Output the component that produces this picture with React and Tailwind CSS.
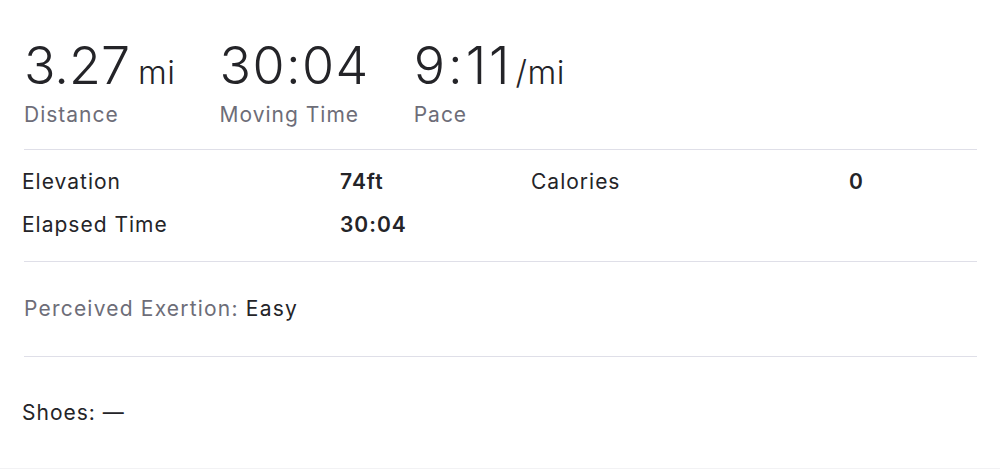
const font = { fontFamily: 'Inter, "Noto Sans", sans-serif' }

function Stat({ value, unit, label, track, unitGap }) {
  return (
    <div className="flex flex-col">
      <div className="flex items-baseline text-[#242428]">
        <span className={`text-[52px] leading-none font-light ${track}`}>{value}</span>
        {unit && <span className={`text-[33px] leading-none font-light tracking-[0.5px] ${unitGap}`}>{unit}</span>}
      </div>
      <span className="mt-[9px] text-[21px] leading-7 tracking-[1px] text-[#6d6d78]">{label}</span>
    </div>
  )
}

export default function App() {
  return (
    <div className="w-[1000px] h-[470px] bg-white" style={font}>
      <div className="pl-6 pr-[23px]">
        {/* Headline stats */}
        <div className="flex gap-11 pt-10 pb-5 border-b border-[#dfdfe8]">
          <Stat value="3.27" unit="mi" label="Distance" track="tracking-normal" unitGap="ml-[8px]" />
          <Stat value="30:04" label="Moving Time" track="tracking-[1.4px]" />
          <Stat value="9:11" unit="/mi" label="Pace" track="tracking-[3px]" unitGap="ml-[3px]" />
        </div>

        {/* Secondary stats */}
        <div className="grid grid-cols-[316px_191px_318px_1fr] gap-y-[15px] pt-[18px] pb-[22px] text-[21px] leading-7 tracking-[1px] text-[#242428] border-b border-[#dfdfe8]">
          <span className="-ml-0.5">Elevation</span>
          <span className="font-semibold">74ft</span>
          <span>Calories</span>
          <span className="font-semibold">0</span>
          <span className="-ml-0.5">Elapsed Time</span>
          <span className="font-semibold">30:04</span>
        </div>

        <div className="pt-[33px] pb-[33px] text-[21px] leading-7 tracking-[1.2px] border-b border-[#dfdfe8]">
          <span className="text-[#6d6d78]">Perceived Exertion: </span>
          <span className="text-[#242428]">Easy</span>
        </div>

        <div className="pt-[42px] pb-[41px] text-[21px] leading-7 tracking-[1px] text-[#242428] -ml-0.5">
          Shoes: —
        </div>
      </div>
      <div className="border-b border-[#f2f2f4]"></div>
    </div>
  )
}
